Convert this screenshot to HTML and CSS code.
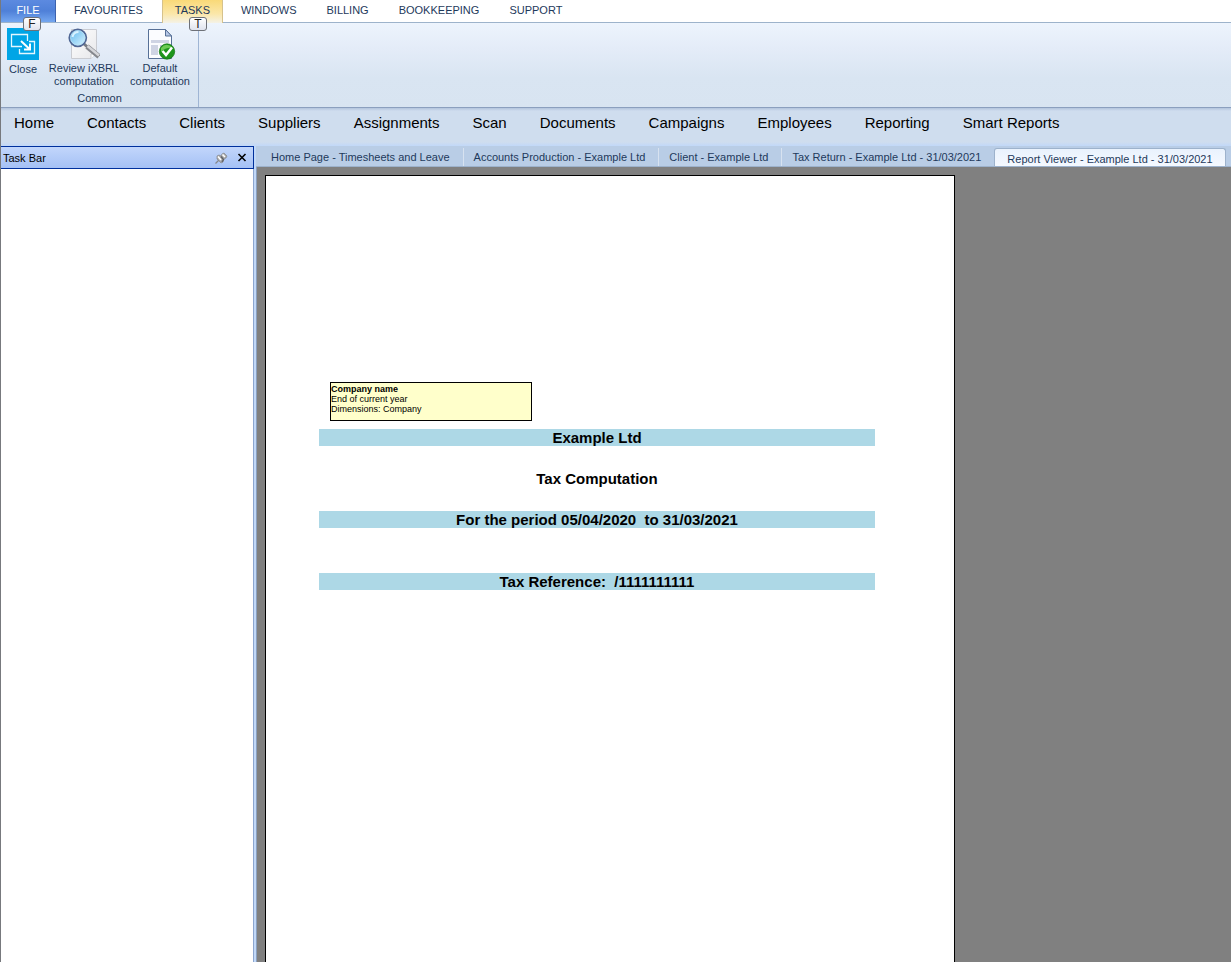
FILE: index.html
```html
<!DOCTYPE html>
<html lang="en">
<head>
<meta charset="utf-8">
<title>Report Viewer - Example Ltd</title>
<link rel="stylesheet" href="styles.css">
</head>
<body>
<div class="app">
  <header class="menu">
    <button class="menu-tab file">FILE<kbd class="keytip">F</kbd></button>
    <button class="menu-tab favourites">FAVOURITES</button>
    <button class="menu-tab active">TASKS<kbd class="keytip tasks-tip">T</kbd></button>
    <button class="menu-tab">WINDOWS</button>
    <button class="menu-tab">BILLING</button>
    <button class="menu-tab">BOOKKEEPING</button>
    <button class="menu-tab">SUPPORT</button>
  </header>
  <section class="ribbon" aria-label="Tasks">
    <div class="group">
      <div class="commands">
        <button class="command close-command">
          <svg class="icon" viewBox="0 0 32 32" aria-hidden="true">
            <rect width="32" height="32" fill="#00a5e6"/>
            <path d="M15 18.500H4.500V6.500H20.500V13M22 13.500H27.500V25.500H12.500V21" fill="none" stroke="#e4f7ff" stroke-width="1.300"/>
            <path d="M14 13L22.500 21M23 15.500V21.500H17" fill="none" stroke="#fff" stroke-width="2"/>
          </svg>
          <span>Close</span>
        </button>
        <button class="command review-command">
          <svg class="icon" viewBox="0 0 32 32" aria-hidden="true">
            <defs>
              <linearGradient id="lens" x1="0" y1="0" x2="1" y2="1"><stop stop-color="#5ab5ed"/><stop offset=".6" stop-color="#a9dcf8"/><stop offset="1" stop-color="#def7ff"/></linearGradient>
              <linearGradient id="sheet" x1="0" y1="0" x2="1" y2="1"><stop stop-color="#fff"/><stop offset="1" stop-color="#e7e7ea"/></linearGradient>
            </defs>
            <path d="M3.500 1.500H28.500V25L23 30.500H3.500Z" fill="url(#sheet)" stroke="#c9cbd1"/>
            <path d="M23 30.500V26L28.500 25" fill="#fff" stroke="#c9cbd1"/>
            <path d="M15.500 15.500L20 19.500" stroke="#777b84" stroke-width="3"/>
            <path d="M19 18.500L31 28.500" stroke="#85878d" stroke-width="5"/>
            <path d="M19.500 18L31 27.500" stroke="#d5d6da" stroke-width="2.500"/>
            <circle cx="9.800" cy="9.800" r="8.500" fill="url(#lens)" stroke="#506795" stroke-width="1.800"/>
            <circle cx="9.800" cy="9.800" r="7.200" fill="none" stroke="#b7dff4" stroke-width=".8"/>
            <path d="M4.500 9Q5.500 4 10.500 4" fill="none" stroke="#d9f2ff" stroke-width="2"/>
          </svg>
          <span>Review iXBRL<br>computation</span>
        </button>
        <button class="command default-command">
          <svg class="icon" viewBox="0 0 32 32" aria-hidden="true">
            <path d="M4.500 1.500H21.500L27.500 8V30.500H4.500Z" fill="#fbfcff" stroke="#577097"/>
            <path d="M21.500 1.500V8H27.500Z" fill="#b6c7e6" stroke="#577097"/>
            <path d="M7 12H25V15H7ZM7 17H14V27H7Z" fill="#cfd4e4"/>
            <path d="M16 17H25V19H16Z" fill="#c2c9dc"/>
            <circle cx="23" cy="23.500" r="7.700" fill="#1d951b" stroke="#127212" stroke-width=".7"/>
            <path d="M17 20Q22 13.500 29 20Q22 19 17 24Z" fill="#6bcb53"/>
            <path d="M18.500 23L22 27L28 19.500" fill="none" stroke="#fff" stroke-width="2.500"/>
          </svg>
          <span>Default<br>computation</span>
        </button>
      </div>
      <div class="group-name">Common</div>
    </div>
  </section>
  <nav class="modules">
    <a href="#">Home</a><a href="#">Contacts</a><a href="#">Clients</a><a href="#">Suppliers</a><a href="#">Assignments</a><a href="#">Scan</a><a href="#">Documents</a><a href="#">Campaigns</a><a href="#">Employees</a><a href="#">Reporting</a><a href="#">Smart Reports</a>
  </nav>
  <div class="workspace">
    <aside class="taskbar">
      <div class="taskbar-head">
        <h2>Task Bar</h2>
        <button class="tool" aria-label="Pin">
          <svg viewBox="0 0 14 14" aria-hidden="true">
            <path d="M1.500 12.500L5 9" stroke="#85868a" stroke-width="1.300"/>
            <path d="M3 5L5 4L7 5L8 3L10 2L13 5L12 7L10 8L9 11L7 12L3 8Z" fill="#a4a5a8" stroke="#87888c" stroke-width=".7"/>
            <path d="M4 5.500L7 9M8.500 3.500L11 6" stroke="#fff" stroke-width="1.600"/>
            <path d="M7 5.500L9.500 8.500L8 11" fill="none" stroke="#606165" stroke-width="1.300"/>
          </svg>
        </button>
        <button class="tool" aria-label="Close task bar">
          <svg viewBox="0 0 14 14" aria-hidden="true"><path d="M3.500 3L10.500 10M10.500 3L3.500 10" stroke="#000" stroke-width="1.600"/></svg>
        </button>
      </div>
      <div class="taskbar-body"></div>
    </aside>
    <main class="viewer">
      <div class="doc-tabs" role="tablist">
        <button class="doc-tab" role="tab">Home Page - Timesheets and Leave</button>
        <button class="doc-tab" role="tab">Accounts Production - Example Ltd</button>
        <button class="doc-tab" role="tab">Client - Example Ltd</button>
        <button class="doc-tab" role="tab">Tax Return - Example Ltd - 31/03/2021</button>
        <button class="doc-tab current" role="tab" aria-selected="true">Report Viewer - Example Ltd - 31/03/2021</button>
      </div>
      <div class="canvas">
        <article class="page">
          <div class="note"><b>Company name</b><br>End of current year<br>Dimensions: Company</div>
          <p class="line tagged">Example Ltd</p>
          <h1 class="line title">Tax Computation</h1>
          <p class="line tagged">For the period 05/04/2020&nbsp; to 31/03/2021</p>
          <p class="line tagged reference">Tax Reference:&nbsp; /1111111111</p>
        </article>
      </div>
    </main>
  </div>
</div>
</body>
</html>
```
FILE: styles.css
```css
* { box-sizing: border-box; }
body {
  margin: 0;
  font-family: "Liberation Sans", Arial, sans-serif;
  font-size: 11px;
  color: #1e395b;
}
button {
  margin: 0;
  padding: 0;
  border: 0;
  background: none;
  font: inherit;
  color: inherit;
}
.app {
  display: flex;
  flex-direction: column;
  min-height: 100vh;
  border-left: 1px solid #77797d;
}

.menu {
  display: flex;
  height: 23px;
  background: #fff;
  border-bottom: 1px solid #9db3cb;
}
.menu-tab {
  position: relative;
  height: 22px;
  padding: 0 15px 2px;
  line-height: 20px;
}
.menu-tab.file {
  width: 55px;
  color: #fff;
  background: linear-gradient(#5c8ae0, #4f80d8 50%, #74a7f0);
  border-right: 1px solid #3d62ad;
}
.menu-tab.favourites { padding: 0 19px 2px 18px; }
.menu-tab.active {
  width: 61px;
  height: 23px;
  padding: 0 0 3px;
  margin-right: 3px;
  background: linear-gradient(#f9d978, #fbe7a9 60%, #f4f2e7);
  border: solid #d6c28c;
  border-width: 0 1px;
}
.keytip {
  position: absolute;
  z-index: 1;
  left: 22px;
  top: 17px;
  width: 18px;
  height: 14px;
  border: 1px solid #6e7178;
  border-radius: 3px;
  background: linear-gradient(#fff, #dfe3ee);
  font: 12px/13px "Liberation Sans", Arial, sans-serif;
  text-align: center;
  color: #222;
}
.tasks-tip { left: 26px; }

.ribbon {
  display: flex;
  height: 84px;
  background: linear-gradient(#edf4fd, #e4ecf8 30%, #d9e5f2 65%, #d8e4f1);
}
.group {
  display: flex;
  flex-direction: column;
  justify-content: space-between;
  width: 198px;
  border-right: 1px solid #9fb5d4;
}
.commands { display: flex; padding-top: 5px; }
.command {
  display: flex;
  flex-direction: column;
  align-items: center;
  gap: 2px;
  line-height: 13px;
}
.icon { width: 32px; height: 32px; }
.close-command { width: 44px; gap: 3px; }
.review-command { width: 78px; }
.default-command { width: 74px; }
.group-name { padding-bottom: 2px; line-height: 13px; text-align: center; }

.modules {
  display: flex;
  gap: 33px;
  height: 39px;
  padding: 6px 13px 0;
  border-top: 1px solid #8b9fbe;
  background: linear-gradient(#b3c4dd, #cfddee 3px, #cfddee 34px, #c1d8f8);
  font-size: 15px;
  line-height: 18px;
  white-space: nowrap;
}
.modules a { color: #000; text-decoration: none; }

.workspace { display: flex; flex: 1; }
.taskbar {
  display: flex;
  flex-direction: column;
  flex: 0 0 253px;
}
.taskbar-head {
  display: flex;
  align-items: center;
  gap: 7px;
  height: 23px;
  padding: 0 4px 0 2px;
  border: 1px solid #00309c;
  border-left: 0;
  background: linear-gradient(#c2d6fb, #a5c1f5);
}
.taskbar-head h2 {
  flex: 1;
  margin: 0;
  font-size: 11px;
  font-weight: normal;
  color: #000;
}
.tool, .tool svg { display: block; width: 14px; height: 14px; }
.taskbar-body {
  flex: 1;
  background: #fff;
  border-right: 1px solid #8ca6d0;
}

.viewer {
  display: flex;
  flex-direction: column;
  flex: 1;
  min-width: 0;
  border-left: 2px solid #c1d8f8;
}
.doc-tabs {
  display: flex;
  height: 21px;
  padding: 2px 5px 0;
  background: #b9cde6;
  border-bottom: 1px solid #9db2cc;
}
.doc-tab {
  padding: 0 13px 0 10px;
  border-right: 1px solid #d7e2f0;
  line-height: 18px;
  white-space: nowrap;
}
.doc-tab:nth-child(4) { border-right: 0; }
.doc-tab.current {
  padding: 1px 12px 0;
  border: 1px solid #9db2cc;
  border-bottom: 0;
  border-radius: 3px 3px 0 0;
  background: linear-gradient(#e9f2fd, #f5f9ff);
}

.canvas {
  display: flex;
  flex: 1;
  padding: 8px 8px 0;
  background: #808080;
  border-left: 1px solid #8aa0c0;
}
.page {
  width: 100%;
  max-width: 690px;
  padding: 206px 79px 32px 53px;
  border: 1px solid #000;
  border-bottom: 0;
  background: #fff;
  color: #000;
}
.note {
  width: 202px;
  height: 39px;
  margin: 0 0 8px 11px;
  padding-top: 1px;
  border: 1px solid #000;
  background: #ffffcb;
  font-size: 9px;
  line-height: 10px;
}
.line {
  margin: 0 0 24px;
  font-size: 15px;
  font-weight: bold;
  line-height: 17px;
  text-align: center;
}
.tagged { background: #add8e6; }
.reference { margin-top: 45px; }
```
